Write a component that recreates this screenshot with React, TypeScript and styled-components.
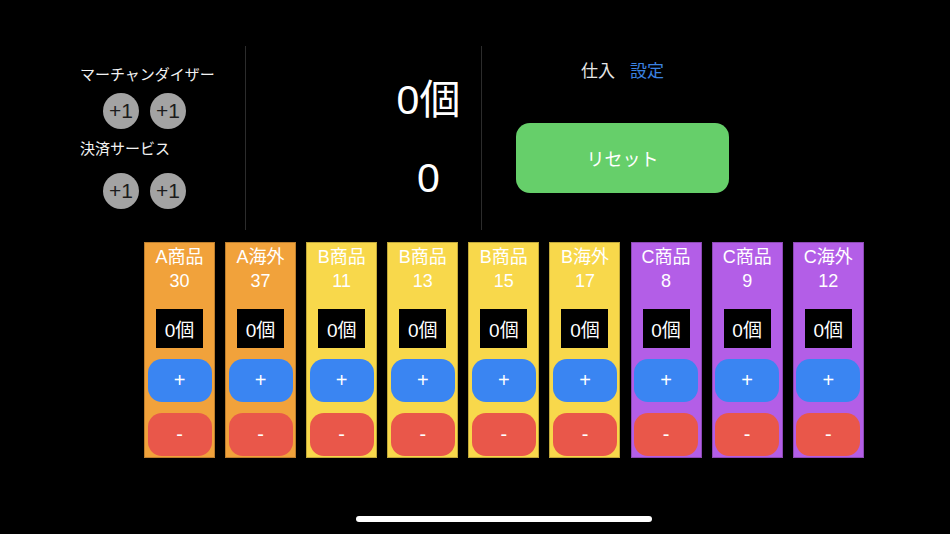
import React from 'react';
import styled, { createGlobalStyle } from 'styled-components';

const GlobalStyle = createGlobalStyle`
  html, body {
    margin: 0;
    padding: 0;
    background: #000;
  }
  body {
    font-family: "Liberation Sans", "Noto Sans CJK JP", sans-serif;
    color: #fff;
  }
`;

type Item = { name: string; price: number; tone: 'orange' | 'yellow' | 'purple' };

const items: Item[] = [
  { name: 'A商品', price: 30, tone: 'orange' },
  { name: 'A海外', price: 37, tone: 'orange' },
  { name: 'B商品', price: 11, tone: 'yellow' },
  { name: 'B商品', price: 13, tone: 'yellow' },
  { name: 'B商品', price: 15, tone: 'yellow' },
  { name: 'B海外', price: 17, tone: 'yellow' },
  { name: 'C商品', price: 8, tone: 'purple' },
  { name: 'C商品', price: 9, tone: 'purple' },
  { name: 'C海外', price: 12, tone: 'purple' },
];

const tones = {
  orange: '#f1a23b',
  yellow: '#f8d84b',
  purple: '#b35ee7',
};

const App: React.FC = () => {
  return (
    <Page>
      <GlobalStyle />
      <TopRow>
        <CounterPanel>
          <Label>マーチャンダイザー</Label>
          <CircleRow>
            <CircleButton>+1</CircleButton>
            <CircleButton>+1</CircleButton>
          </CircleRow>
          <Label $top={11}>決済サービス</Label>
          <CircleRow $top={15}>
            <CircleButton>+1</CircleButton>
            <CircleButton>+1</CircleButton>
          </CircleRow>
        </CounterPanel>
        <TotalPanel>
          <BigNumber>0個</BigNumber>
          <BigNumber $top={30}>0</BigNumber>
        </TotalPanel>
        <ActionPanel>
          <Links>
            <span>仕入</span>
            <LinkText>設定</LinkText>
          </Links>
          <ResetButton>リセット</ResetButton>
        </ActionPanel>
      </TopRow>
      <Columns>
        {items.map((item, i) => (
          <Column key={i} $color={tones[item.tone]}>
            <Title>{item.name}</Title>
            <Title>{item.price}</Title>
            <CountBox>0個</CountBox>
            <StepButton $kind="plus">+</StepButton>
            <StepButton $kind="minus">-</StepButton>
          </Column>
        ))}
      </Columns>
      <HomeBar />
    </Page>
  );
};

const Page = styled.div`
  width: 950px;
  height: 534px;
  display: flex;
  flex-direction: column;
  padding-top: 46px;
  box-sizing: border-box;
  overflow: hidden;
`;

const TopRow = styled.div`
  display: flex;
  height: 184px;
  padding-left: 60px;
`;

const CounterPanel = styled.div`
  width: 186px;
  border-right: 1px solid #2c2c2c;
  display: flex;
  flex-direction: column;
  padding-top: 20px;
  box-sizing: border-box;
`;

const Label = styled.div<{ $top?: number }>`
  font-size: 15px;
  line-height: 18px;
  padding-left: 20px;
  margin-top: ${(p) => p.$top ?? 0}px;
  color: #f2f2f2;
`;

const CircleRow = styled.div<{ $top?: number }>`
  display: flex;
  gap: 11px;
  padding-left: 43px;
  margin-top: ${(p) => p.$top ?? 9}px;
`;

const CircleButton = styled.div`
  width: 36px;
  height: 36px;
  border-radius: 50%;
  background: #a3a3a3;
  color: #1c1c1c;
  font-size: 21px;
  display: flex;
  align-items: center;
  justify-content: center;
`;

const TotalPanel = styled.div`
  width: 236px;
  border-right: 1px solid #2c2c2c;
  display: flex;
  flex-direction: column;
  align-items: center;
  padding-left: 130px;
  padding-top: 30px;
  box-sizing: border-box;
`;

const BigNumber = styled.div<{ $top?: number }>`
  font-size: 41px;
  line-height: 48px;
  margin-top: ${(p) => p.$top ?? 0}px;
`;

const ActionPanel = styled.div`
  display: flex;
  flex-direction: column;
  align-items: center;
  width: 213px;
  margin-left: 34px;
  padding-top: 15px;
`;

const Links = styled.div`
  display: flex;
  gap: 15px;
  font-size: 17px;
  line-height: 22px;
  color: #e6e6e6;
`;

const LinkText = styled.span`
  color: #3b82e0;
`;

const ResetButton = styled.div`
  margin-top: 40px;
  width: 213px;
  height: 70px;
  border-radius: 14px;
  background: #66cf6a;
  color: #fff;
  font-size: 18px;
  display: flex;
  align-items: center;
  justify-content: center;
`;

const Columns = styled.div`
  display: flex;
  gap: 10.1px;
  margin-top: 12px;
  padding-left: 144px;
`;

const Column = styled.div<{ $color: string }>`
  width: 71px;
  height: 216px;
  box-sizing: border-box;
  background: ${(p) => p.$color};
  border: 1px solid rgba(0, 0, 0, 0.22);
  display: flex;
  flex-direction: column;
  align-items: center;
  padding-top: 2px;
`;

const Title = styled.div`
  font-size: 18px;
  line-height: 24px;
  color: #fff;
`;

const CountBox = styled.div`
  margin-top: 16px;
  width: 47px;
  height: 39px;
  box-sizing: border-box;
  background: #000;
  border: 1px solid rgba(0, 0, 0, 0.35);
  display: flex;
  align-items: center;
  justify-content: center;
  font-size: 19px;
  color: #fff;
`;

const StepButton = styled.div<{ $kind: 'plus' | 'minus' }>`
  margin-top: 11px;
  width: 64px;
  height: 43px;
  border-radius: 14px;
  background: ${(p) => (p.$kind === 'plus' ? '#3a85f2' : '#e9574a')};
  color: #fff;
  font-size: 20px;
  display: flex;
  align-items: center;
  justify-content: center;
`;

const HomeBar = styled.div`
  margin-top: 58px;
  margin-left: 356px;
  width: 296px;
  height: 6px;
  border-radius: 3px;
  background: #fff;
`;

export default App;
